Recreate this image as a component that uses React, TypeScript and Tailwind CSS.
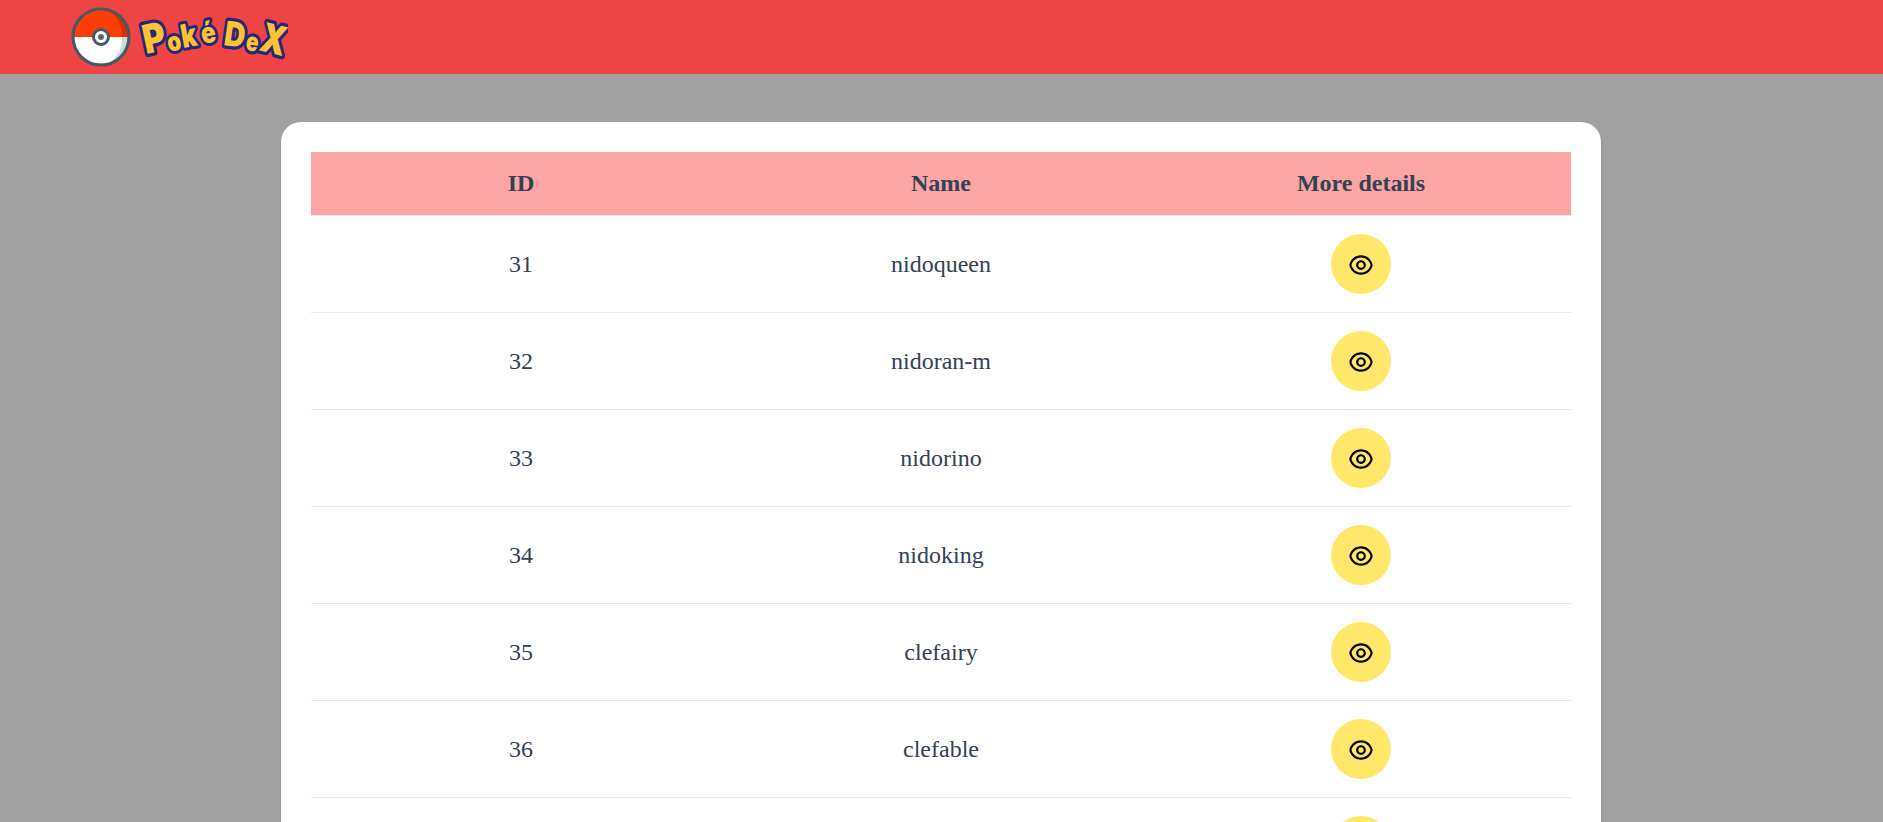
import { RiEyeLine } from 'react-icons/ri';

const pokemons = [
  { id: 31, name: 'nidoqueen' },
  { id: 32, name: 'nidoran-m' },
  { id: 33, name: 'nidorino' },
  { id: 34, name: 'nidoking' },
  { id: 35, name: 'clefairy' },
  { id: 36, name: 'clefable' },
  { id: 37, name: 'vulpix' },
  { id: 38, name: 'ninetales' },
  { id: 39, name: 'jigglypuff' },
  { id: 40, name: 'wigglytuff' },
];

// x, y are the baseline start of each letter inside the logo box, sx / sy stretch it
const logoLetters = [
  { c: 'P', x: 10, y: 47, r: -12, sx: 0.9, sy: 1.05, s: 38 },
  { c: 'o', x: 33, y: 45, r: -12, sx: 0.8, sy: 0.95, s: 28 },
  { c: 'k', x: 47, y: 41, r: -10, sx: 0.75, sy: 0.95, s: 34 },
  { c: 'é', x: 67, y: 37, r: -12, sx: 0.8, sy: 0.95, s: 30 },
  { c: 'D', x: 87, y: 38, r: 8, sx: 0.85, sy: 1.0, s: 34 },
  { c: 'e', x: 109, y: 43, r: 8, sx: 0.8, sy: 1.0, s: 26 },
  { c: 'X', x: 122, y: 43, r: 14, sx: 0.85, sy: 1.05, s: 38 },
];

function Pokeball() {
  return (
    <svg width="60" height="60" viewBox="0 0 60 60" className="shrink-0">
      <path d="M2 30a28 28 0 0 1 56 0z" fill="#ff3d00" />
      <path d="M34 2a28 28 0 0 1 24 28H51A28 28 0 0 0 34 2z" fill="#dd2c00" />
      <path d="M2 30a28 28 0 0 0 56 0z" fill="#ffffff" />
      <path d="M34 58a28 28 0 0 0 24-28H51a28 28 0 0 1-17 28z" fill="#cfd8dc" />
      <circle cx="30" cy="30" r="28" fill="none" stroke="#455a64" strokeWidth="3.2" />
      <circle cx="30" cy="30" r="7.5" fill="#ffffff" stroke="#455a64" strokeWidth="3" />
      <circle cx="30" cy="30" r="3" fill="#546e7a" />
    </svg>
  );
}

function PokedexLogo() {
  return (
    <svg width="152" height="60" viewBox="0 0 152 60" className="shrink-0">
      {logoLetters.map((l, i) => (
        <text
          key={i}
          fontSize={l.s}
          fontWeight="900"
          fontFamily="Inter, 'DejaVu Sans', sans-serif"
          fill="#fec232"
          stroke="#23287a"
          strokeWidth="6.5"
          strokeLinejoin="round"
          paintOrder="stroke"
          transform={`translate(${l.x} ${l.y}) rotate(${l.r}) scale(${l.sx} ${l.sy})`}
        >
          {l.c}
        </text>
      ))}
    </svg>
  );
}

export default function App() {
  return (
    <div className="min-h-screen bg-[#a1a1a1] font-['Liberation_Serif',serif] text-[#334155]">
      {/* Navbar */}
      <nav className="flex h-[74px] items-center gap-[5px] bg-[#ef4444] pl-[71px]">
        <Pokeball />
        <PokedexLogo />
      </nav>

      {/* Table card */}
      <main className="flex justify-center pt-[48px] pr-[1px] pb-[48px]">
        <div className="w-[1320px] rounded-[20px] bg-white p-[30px] shadow-sm">
          <table className="w-full table-fixed border-collapse text-center text-2xl">
            <thead>
              <tr className="h-[63px] border-b border-slate-200 bg-[#fca5a5]">
                <th className="font-bold">ID</th>
                <th className="font-bold">Name</th>
                <th className="font-bold">More details</th>
              </tr>
            </thead>
            <tbody>
              {pokemons.map((p) => (
                <tr key={p.id} className="border-b border-slate-200">
                  <td className="py-[18px]">{p.id}</td>
                  <td className="py-[18px]">{p.name}</td>
                  <td className="py-[18px]">
                    <button className="mx-auto flex h-[60px] w-[60px] items-center justify-center rounded-full bg-[#ffe869] pt-[2px] text-black">
                      <RiEyeLine size={26} />
                    </button>
                  </td>
                </tr>
              ))}
            </tbody>
          </table>
        </div>
      </main>
    </div>
  );
}
